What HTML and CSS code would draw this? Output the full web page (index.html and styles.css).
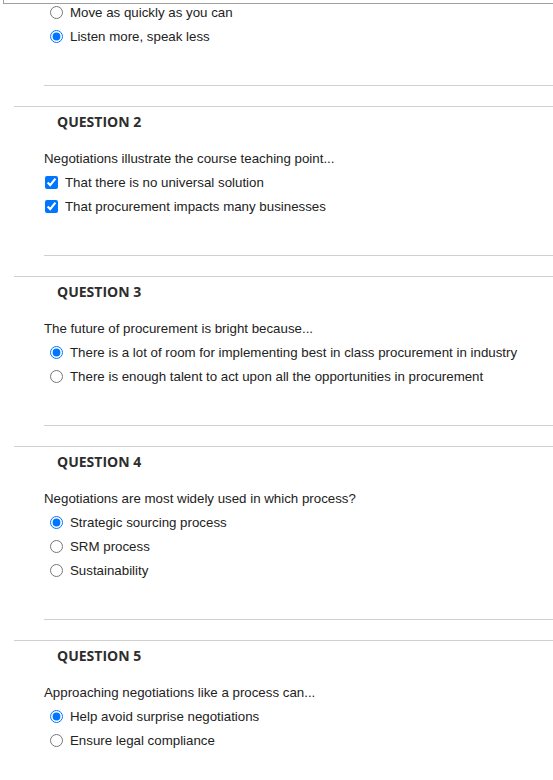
FILE: index.html
```html
<!DOCTYPE html>
<html lang="en">
<head>
  <meta charset="UTF-8" />
  <meta name="viewport" content="width=device-width, initial-scale=1.0"/>
  <title>Quiz</title>
  <link rel="stylesheet" href="styles.css">
</head>
<body>
  <div class="prev-box"></div>

  <div class="question first">
    <div class="q-body">
      <div class="answers radio">
        <label class="answer"><input type="radio" name="q1"><span>Move as quickly as you can</span></label>
        <label class="answer"><input type="radio" name="q1" checked><span>Listen more, speak less</span></label>
      </div>
    </div>
    <div class="q-foot"></div>
  </div>

  <div class="question">
    <h3 class="q-title">QUESTION 2</h3>
    <div class="q-body">
      <p class="q-text">Negotiations illustrate the course teaching point...</p>
      <div class="answers check">
        <label class="answer"><input type="checkbox" checked><span>That there is no universal solution</span></label>
        <label class="answer"><input type="checkbox" checked><span>That procurement impacts many businesses</span></label>
      </div>
    </div>
    <div class="q-foot"></div>
  </div>

  <div class="question">
    <h3 class="q-title">QUESTION 3</h3>
    <div class="q-body">
      <p class="q-text">The future of procurement is bright because...</p>
      <div class="answers radio">
        <label class="answer"><input type="radio" name="q3" checked><span>There is a lot of room for implementing best in class procurement in industry</span></label>
        <label class="answer"><input type="radio" name="q3"><span>There is enough talent to act upon all the opportunities in procurement</span></label>
      </div>
    </div>
    <div class="q-foot"></div>
  </div>

  <div class="question">
    <h3 class="q-title">QUESTION 4</h3>
    <div class="q-body">
      <p class="q-text">Negotiations are most widely used in which process?</p>
      <div class="answers radio">
        <label class="answer"><input type="radio" name="q4" checked><span>Strategic sourcing process</span></label>
        <label class="answer"><input type="radio" name="q4"><span>SRM process</span></label>
        <label class="answer"><input type="radio" name="q4"><span>Sustainability</span></label>
      </div>
    </div>
    <div class="q-foot"></div>
  </div>

  <div class="question">
    <h3 class="q-title">QUESTION 5</h3>
    <div class="q-body">
      <p class="q-text">Approaching negotiations like a process can...</p>
      <div class="answers radio">
        <label class="answer"><input type="radio" name="q5" checked><span>Help avoid surprise negotiations</span></label>
        <label class="answer"><input type="radio" name="q5"><span>Ensure legal compliance</span></label>
      </div>
    </div>
    <div class="q-foot"></div>
  </div>
</body>
</html>
```

FILE: styles.css
```css
body {
  margin: 0;
  padding: 0;
  background: #fff;
  color: #222;
  font-family: "Liberation Sans", Arial, sans-serif;
  font-size: 13.3px;
  overflow-x: hidden;
}

.prev-box {
  height: 3px;
  margin-left: 3px;
  border-left: 1px solid #a0a0a0;
  border-bottom: 1px solid #a0a0a0;
}

.question {
  margin-left: 14px;
  border-top: 1px solid #d0d0d0;
  padding-top: 5px;
}

.question.first {
  border-top: none;
  padding-top: 0;
}

.q-title {
  margin: 0;
  padding-left: 43px;
  font-family: "Open Sans", sans-serif;
  font-size: 14px;
  font-weight: bold;
  line-height: 20px;
  color: #2d2d2d;
}

.q-body {
  padding-left: 30px;
}

.q-text {
  margin: 18px 0 8px;
  line-height: 16px;
  padding-top: 1px;
  height: 16px;
  box-sizing: border-box;
}

.answers {
  display: flex;
  flex-direction: column;
  gap: 8px;
}

.answers.radio {
  padding-left: 6px;
}

.answers.check {
  padding-left: 1px;
}

.answer {
  display: flex;
  align-items: center;
  height: 16px;
  white-space: nowrap;
}

.answer span {
  line-height: 16px;
  padding-top: 2px;
}

.answer input {
  margin: 0 7px 0 0;
  width: 13px;
  height: 13px;
  flex: none;
}

.answers.check .answer input {
  margin-right: 7px;
}

.q-foot {
  margin: 41px 0 20px 30px;
  border-top: 1px solid #d0d0d0;
}
```
